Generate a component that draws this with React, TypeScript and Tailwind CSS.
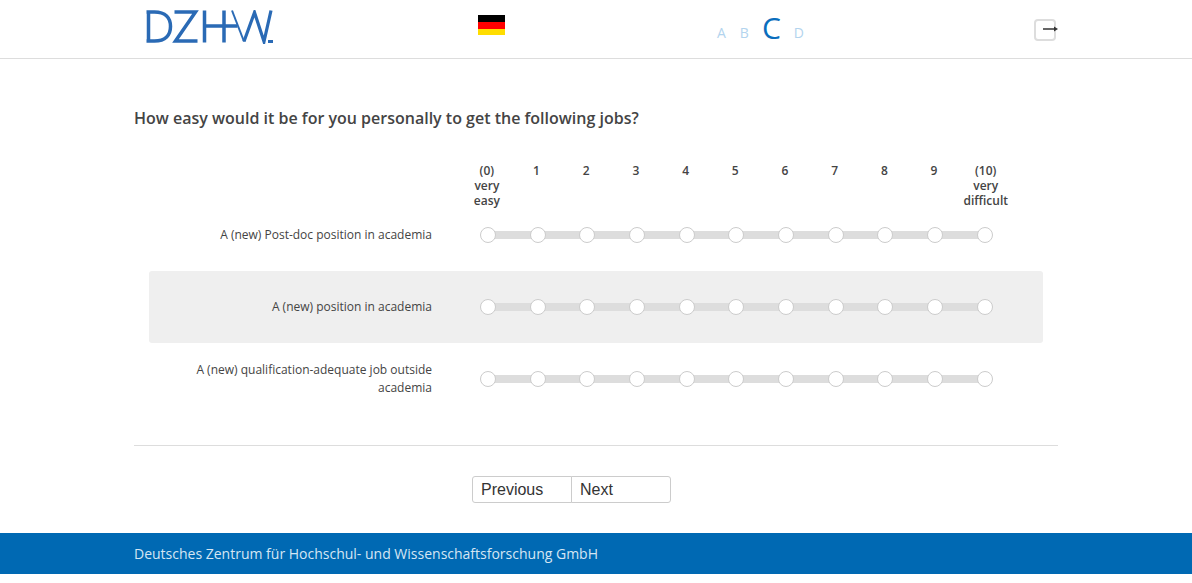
const points = [0, 1, 2, 3, 4, 5, 6, 7, 8, 9, 10];

const headers: string[][] = [
  ["(0)", "very", "easy"],
  ["1"],
  ["2"],
  ["3"],
  ["4"],
  ["5"],
  ["6"],
  ["7"],
  ["8"],
  ["9"],
  ["(10)", "very", "difficult"],
];

const rows = [
  { label: "A (new) Post-doc position in academia", shaded: false },
  { label: "A (new) position in academia", shaded: true },
  { label: "A (new) qualification-adequate job outside academia", shaded: false },
];

const Logo = () => (
  <svg width="128" height="34" viewBox="0 0 128 34" fill="none" stroke="#2a6ab5" strokeWidth="3.500">
    <path d="M3.500 0.500v32M1.500 2h8c11 0 16 6 16 14.500s-5 14.500-16 14.500h-8" />
    <path d="M29.500 2h21L30.500 31h22" />
    <path d="M59.500 0.500v32M79 0.500v32M59.500 16h33" />
    <path strokeWidth="2" d="M87 0.500l12 31" />
    <path strokeWidth="3.200" d="M99 31.500l10.500-29 9.500 29 7-31" />
    <path strokeWidth="3" d="M123 31.500h5" />
  </svg>
);

const Flag = () => (
  <div className="flex h-5 w-[27px] flex-col">
    <div className="h-[7px] bg-black" />
    <div className="h-[7px] bg-[#ff0000]" />
    <div className="h-[6px] bg-[#ffdd00]" />
  </div>
);

const Radio = () => (
  <div className="relative z-10 flex w-[49.7px] justify-center">
    <div className="h-4 w-4 rounded-full border border-[#ccc] bg-white" />
  </div>
);

const Scale = () => (
  <div className="relative flex items-center">
    <div className="absolute top-1/2 right-[25px] left-[25px] h-2 -translate-y-1/2 bg-[#ddd]" />
    {points.map((p) => (
      <Radio key={p} />
    ))}
  </div>
);

const App = () => {
  return (
    <div className="h-[583px] overflow-hidden bg-white font-['Open_Sans',sans-serif] text-[#444]">
      <header className="flex h-[59px] border-b border-[#ddd]">
        <div className="ml-[145px] pt-[10px]">
          <Logo />
        </div>
        <div className="ml-[205px] pt-[15px]">
          <Flag />
        </div>
        <div className="ml-[212px] flex h-[44px] items-end gap-[14px] pb-[1px] text-sm text-[#b3d4ee]">
          <span className="leading-5">A</span>
          <span className="leading-5">B</span>
          <span className="-mb-[2px] -ml-px text-[30px] leading-[34px] text-[#0a6ebd]">C</span>
          <span className="-ml-px leading-5">D</span>
        </div>
        <div className="ml-[230px] pt-[19px]">
          <div className="relative h-[22px] w-[22px] rounded-[4px] border-2 border-[#ddd]">
            <svg className="absolute top-[3px] left-[7px]" width="17" height="10" viewBox="0 0 17 10">
              <path d="M0 5h11" stroke="#333" strokeWidth="1.500" />
              <path d="M11 2.500L15 5l-4 2.500z" fill="#333" />
            </svg>
          </div>
        </div>
      </header>

      <main className="mx-[134px]">
        <h1 className="pt-[48px] text-base leading-[22px] font-semibold">
          How easy would it be for you personally to get the following jobs?
        </h1>

        <div className="mt-[34px] ml-[328px] flex h-[36px] text-xs leading-[15px] font-semibold">
          {headers.map((lines, i) => (
            <div key={i} className="w-[49.7px] text-center whitespace-nowrap last:pl-[4px]">
              {lines.map((line) => (
                <div key={line}>{line}</div>
              ))}
            </div>
          ))}
        </div>

        <div className="ml-[15px] w-[894px]">
          {rows.map((row) => (
            <div
              key={row.label}
              className={`flex h-[72px] items-center rounded-[3px] ${row.shaded ? "bg-[#efefef]" : ""}`}
            >
              <div className="w-[283px] text-right text-xs leading-[18px]">{row.label}</div>
              <div className="ml-[31px]">
                <Scale />
              </div>
            </div>
          ))}
        </div>

        <div className="mt-[30px] border-t border-[#ddd]" />

        <div className="mt-[30px] ml-[338px] flex">
          <button className="h-[27px] w-[100px] rounded-l-[3px] border border-[#ccc] bg-white pl-2 text-left font-['Liberation_Sans',sans-serif] text-base text-[#333]">
            Previous
          </button>
          <button className="-ml-px h-[27px] w-[100px] rounded-r-[3px] border border-[#ccc] bg-white pl-2 text-left font-['Liberation_Sans',sans-serif] text-base text-[#333]">
            Next
          </button>
        </div>
      </main>

      <footer className="mt-[30px] h-[41px] bg-[#0069b3] pl-[134px] text-sm leading-[41px] text-[#d5e6f3]">
        Deutsches Zentrum für Hochschul- und Wissenschaftsforschung GmbH
      </footer>
    </div>
  );
};

export default App;
